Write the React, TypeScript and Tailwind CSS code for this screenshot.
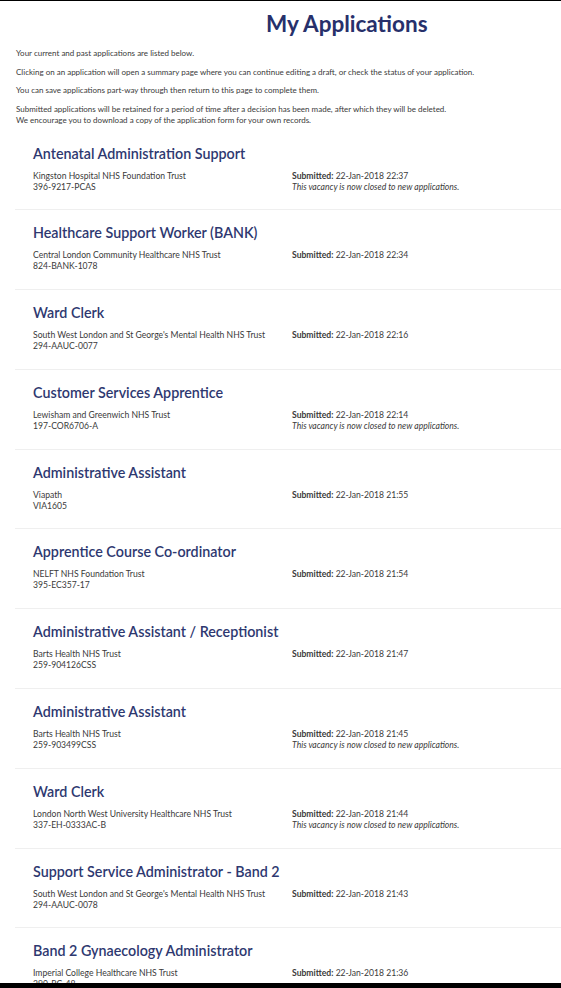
import React from "react";

type Application = {
  title: string;
  employer: string;
  reference: string;
  submitted: string;
  closed?: boolean;
};

const applications: Application[] = [
  { title: "Antenatal Administration Support", employer: "Kingston Hospital NHS Foundation Trust", reference: "396-9217-PCAS", submitted: "22-Jan-2018 22:37", closed: true },
  { title: "Healthcare Support Worker (BANK)", employer: "Central London Community Healthcare NHS Trust", reference: "824-BANK-1078", submitted: "22-Jan-2018 22:34" },
  { title: "Ward Clerk", employer: "South West London and St George's Mental Health NHS Trust", reference: "294-AAUC-0077", submitted: "22-Jan-2018 22:16" },
  { title: "Customer Services Apprentice", employer: "Lewisham and Greenwich NHS Trust", reference: "197-COR6706-A", submitted: "22-Jan-2018 22:14", closed: true },
  { title: "Administrative Assistant", employer: "Viapath", reference: "VIA1605", submitted: "22-Jan-2018 21:55" },
  { title: "Apprentice Course Co-ordinator", employer: "NELFT NHS Foundation Trust", reference: "395-EC357-17", submitted: "22-Jan-2018 21:54" },
  { title: "Administrative Assistant / Receptionist", employer: "Barts Health NHS Trust", reference: "259-904126CSS", submitted: "22-Jan-2018 21:47" },
  { title: "Administrative Assistant", employer: "Barts Health NHS Trust", reference: "259-903499CSS", submitted: "22-Jan-2018 21:45", closed: true },
  { title: "Ward Clerk", employer: "London North West University Healthcare NHS Trust", reference: "337-EH-0333AC-B", submitted: "22-Jan-2018 21:44", closed: true },
  { title: "Support Service Administrator - Band 2", employer: "South West London and St George's Mental Health NHS Trust", reference: "294-AAUC-0078", submitted: "22-Jan-2018 21:43" },
  { title: "Band 2 Gynaecology Administrator", employer: "Imperial College Healthcare NHS Trust", reference: "290-RC-48", submitted: "22-Jan-2018 21:36" },
];

function ApplicationRow({ app }: { app: Application }) {
  return (
    <li className="border-b border-[#efefef] pl-[18px] pt-[14px] h-[79.8px]">
      <h2 className="text-[14.3px] leading-[18px] font-semibold text-[#2e3870]">{app.title}</h2>
      <div className="mt-[8px] grid grid-cols-[259px_1fr] text-[8.6px] leading-[11px] text-[#3a3a3a]">
        <div>
          <div>{app.employer}</div>
          <div>{app.reference}</div>
        </div>
        <div>
          <div>
            <span className="font-bold">Submitted:</span> {app.submitted}
          </div>
          {app.closed && <div className="italic">This vacancy is now closed to new applications.</div>}
        </div>
      </div>
    </li>
  );
}

export default function App() {
  return (
    <div className="h-[988px] w-[561px] flex flex-col bg-white font-['Lato','Liberation_Sans',sans-serif]">
      <div className="h-[1px] bg-black" />
      <main className="flex-1 overflow-hidden">
        <h1 className="pl-[266px] pt-[9px] text-[22.5px] leading-[28px] font-bold text-[#27306b]">My Applications</h1>
        <section className="px-[16px] mt-[10px] text-[8px] leading-[11px] text-[#3a3a3a] flex flex-col gap-[7.5px]">
          <p>Your current and past applications are listed below.</p>
          <p>Clicking on an application will open a summary page where you can continue editing a draft, or check the status of your application.</p>
          <p>You can save applications part-way through then return to this page to complete them.</p>
          <p>
            Submitted applications will be retained for a period of time after a decision has been made, after which they will be deleted.
            <br />
            We encourage you to download a copy of the application form for your own records.
          </p>
        </section>
        <ul className="ml-[15px] mt-[5px]">
          {applications.map((app, i) => (
            <ApplicationRow key={i} app={app} />
          ))}
        </ul>
      </main>
      <div className="h-[5px] bg-black" />
    </div>
  );
}
